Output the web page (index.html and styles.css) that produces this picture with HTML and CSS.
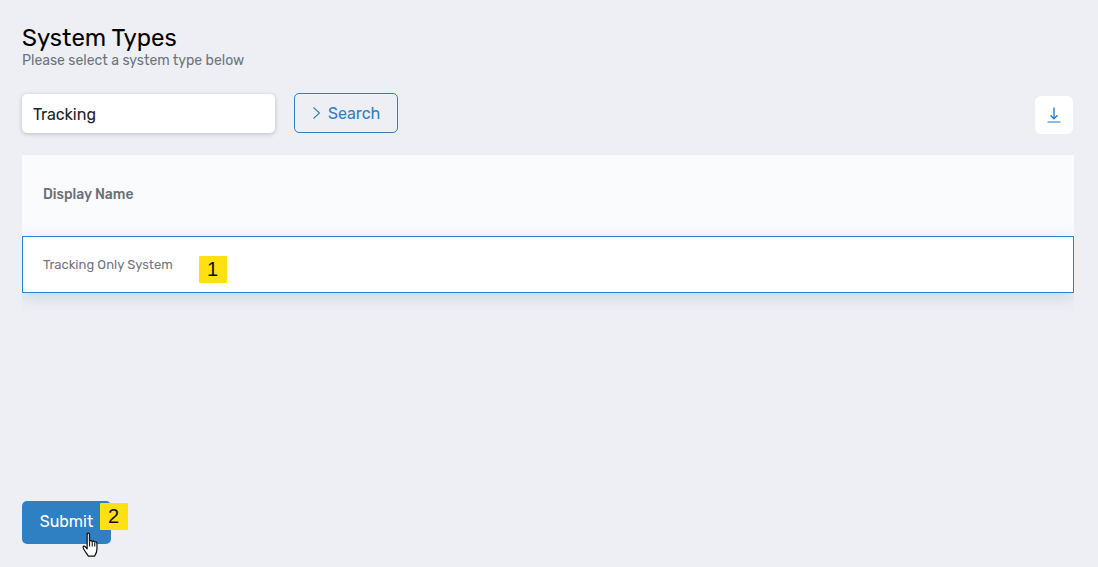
FILE: index.html
```html
<!DOCTYPE html>
<html lang="en">
<head>
    <meta charset="UTF-8">
    <meta name="viewport" content="width=device-width, initial-scale=1.0">
    <title>System Types</title>
    <link rel="stylesheet" href="styles.css">
</head>
<body>

    <div class="page">
        <h2 class="title">System Types</h2>
        <p class="subtitle">Please select a system type below</p>

        <div class="toolbar">
            <div class="search-input">Tracking</div>
            <button class="search-btn">
                <svg width="9" height="14" viewBox="0 0 9 14"><path d="M1.500 1.500 7.500 7l-6 5.500" fill="none" stroke="#2f80c3" stroke-width="1.100"/></svg>
                Search
            </button>
            <button class="download-btn" aria-label="Download">
                <svg width="14" height="16" viewBox="0 0 14 16"><path d="M7 .5v11M3.500 8.300 7 11.800l3.500-3.500" fill="none" stroke="#2f80c3" stroke-width="1.400"/><path d="M.5 15h13" fill="none" stroke="#6aa6d8" stroke-width="1.500"/></svg>
            </button>
        </div>

        <div class="table">
            <div class="table-head">Display Name</div>
            <div class="table-row">
                Tracking Only System
                <span class="marker marker-row">1</span>
            </div>
        </div>

        <div class="actions">
            <button class="submit-btn">Submit</button>
            <span class="marker marker-submit">2</span>
            <svg class="hand" width="18" height="25" viewBox="0 0 18 26">
                <path d="M5 2.200c0-1.500 2.400-1.500 2.400 0v7.300c1.200-.6 2.300-.5 2.800.3 1-.5 2.100-.3 2.500.5 1.300-.4 2.500.3 2.500 1.700v5.500c0 3-1.700 6.500-2.500 7.500H6.200C5 23 3.800 21.500 2.800 20 2 18.800.8 17 .8 15.800c0-1.200 1.300-1.500 2-.7L5 17.500z" fill="#fff" stroke="#111" stroke-width="1.300" stroke-linejoin="round"/>
                <path d="M7.500 10v5M10.300 10.500V15M12.900 11v4" fill="none" stroke="#111" stroke-width="1.100"/>
            </svg>
        </div>
    </div>

</body>
</html>
```

FILE: styles.css
```css
html, body {
    height: 100%;
}
body {
    font-family: Rubik, Inter, "Liberation Sans", sans-serif;
    margin: 0;
    background-color: #eeeff4;
    overflow: hidden;
}
.page {
    height: 567px;
    box-sizing: border-box;
    padding: 24px 24px 23px 22px;
    display: flex;
    flex-direction: column;
}
.title {
    margin: 0;
    font-size: 24px;
    font-weight: 400;
    line-height: 28px;
    color: #000;
}
.subtitle {
    margin: 1px 0 0;
    font-size: 14px;
    line-height: 16px;
    color: #6c7480;
}
.toolbar {
    display: flex;
    align-items: flex-end;
    margin-top: 24px;
}
.search-input {
    width: 253px;
    height: 39px;
    box-sizing: border-box;
    padding-left: 11px;
    line-height: 41px;
    font-size: 16px;
    color: #212529;
    background: #fff;
    border-radius: 5px;
    box-shadow: 0 1px 4px rgba(60, 70, 100, 0.3);
}
.search-btn {
    display: flex;
    align-items: center;
    gap: 7px;
    height: 40px;
    width: 104px;
    margin-left: 19px;
    padding: 0 0 0 17px;
    font: inherit;
    font-size: 16px;
    color: #2f80c3;
    background: transparent;
    border: 1px solid #2f80c3;
    border-radius: 5px;
}
.download-btn {
    display: flex;
    align-items: center;
    justify-content: center;
    width: 38px;
    height: 38px;
    margin: 0 1px -1px auto;
    padding: 0;
    background: #fff;
    border: none;
    border-radius: 6px;
}
.table {
    margin-top: 22px;
    padding-bottom: 18px;
    overflow: hidden;
}
.table-head {
    height: 81px;
    line-height: 79px;
    padding-left: 21px;
    font-size: 14px;
    font-weight: 500;
    color: #6b6f78;
    background: #fafbfd;
}
.table-row {
    position: relative;
    height: 57px;
    box-sizing: border-box;
    padding-left: 20px;
    line-height: 55px;
    font-size: 13px;
    color: #75757f;
    background: #fff;
    border: 1px solid #2d83cd;
    box-shadow: 0 4px 16px rgba(80, 105, 150, 0.2);
}
.marker {
    position: absolute;
    width: 28px;
    height: 27px;
    line-height: 27px;
    text-align: center;
    text-indent: -1px;
    font-family: "Liberation Sans", sans-serif;
    font-size: 20px;
    color: #111;
    background: #ffe013;
    border-radius: 1px;
}
.marker-row {
    left: 176px;
    top: 19px;
}
.actions {
    position: relative;
    margin-top: auto;
    height: 43px;
}
.submit-btn {
    width: 89px;
    height: 43px;
    padding: 0 0 2px;
    font: inherit;
    font-size: 16px;
    color: #fff;
    background: #2f80c3;
    border: none;
    border-radius: 5px;
}
.marker-submit {
    left: 78px;
    top: 2px;
}
.hand {
    position: absolute;
    left: 60px;
    top: 31px;
}
```
